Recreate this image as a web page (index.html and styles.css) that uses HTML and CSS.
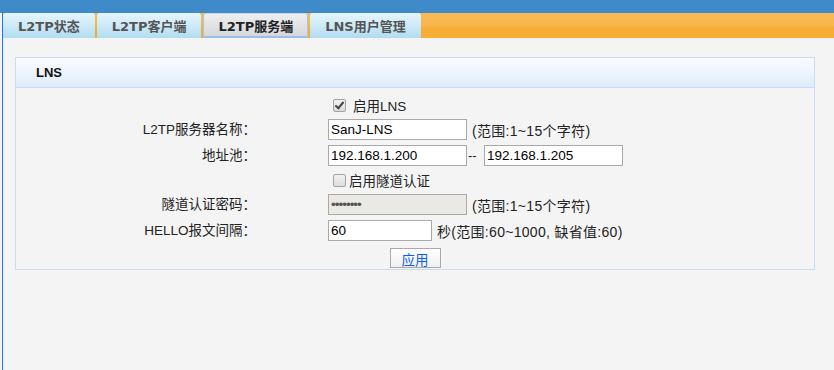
FILE: index.html
```html
<!DOCTYPE html>
<html>
<head>
<meta charset="utf-8">
<link rel="stylesheet" href="styles.css">
</head>
<body>
<div class="topbar"></div>
<div class="frame">
  <div class="tabs">
    <div class="tab">L2TP状态</div>
    <div class="tab">L2TP客户端</div>
    <div class="tab active">L2TP服务端</div>
    <div class="tab">LNS用户管理</div>
  </div>
  <div class="content">
    <div class="panel">
      <div class="panel-head">LNS</div>
      <div class="panel-body">
        <div class="form">
          <div class="cell cbrow"><label class="cb"><input type="checkbox" checked><span class="cbtext wide">启用LNS</span></label></div>

          <div class="label">L2TP服务器名称：</div>
          <div class="cell"><input class="txt" type="text" value="SanJ-LNS"><span class="hint">(范围:1~15个字符)</span></div>

          <div class="label">地址池：</div>
          <div class="cell"><input class="txt" type="text" value="192.168.1.200"><span class="dash">--</span><input class="txt" type="text" value="192.168.1.205"></div>

          <div class="cell cbrow"><label class="cb"><input type="checkbox"><span class="cbtext">启用隧道认证</span></label></div>

          <div class="label">隧道认证密码：</div>
          <div class="cell"><input class="txt pw" type="password" value="12345678" disabled><span class="hint">(范围:1~15个字符)</span></div>

          <div class="label">HELLO报文间隔：</div>
          <div class="cell"><input class="txt short" type="text" value="60"><span class="hint">秒(范围:60~1000, 缺省值:60)</span></div>

          <div class="btnrow"><button class="btn" type="button">应用</button></div>
        </div>
      </div>
    </div>
  </div>
</div>
</body>
</html>
```
FILE: styles.css
```css
html, body {
  margin: 0;
  padding: 0;
  background: #f4f4f4;
  height: 100%;
}
body {
  font-family: "Liberation Sans", Arial, "Noto Sans CJK SC", sans-serif;
  font-size: 13px;
  color: #222;
}
.topbar {
  height: 13px;
  background: #3f8bca;
}
.frame {
  margin-left: 2px;
  border-left: 1px solid #1a78ff;
  min-height: calc(100% - 13px);
  box-sizing: border-box;
}
.tabs {
  display: flex;
  height: 25px;
  background: linear-gradient(to bottom, #f8ba52 0%, #f8b850 45%, #f6ae37 60%, #f6ad36 100%);
}
.tab {
  height: 25px;
  box-sizing: border-box;
  padding: 0 15px;
  margin-right: 2px;
  display: flex;
  align-items: center;
  font-family: "DejaVu Sans", Verdana, "Noto Sans CJK SC", sans-serif;
  font-weight: bold;
  font-size: 13px;
  color: #555;
  background: linear-gradient(to bottom, #e6f5fc 0%, #cdeaf7 50%, #b1dcf0 100%);
  border-radius: 3px 3px 0 0;
}
.tab.active {
  color: #222;
  padding: 0 14px;
  background: linear-gradient(to bottom, #eceeef 0%, #dfe1e3 60%, #d5d8db 100%);
  border: 1px solid #a9c4ea;
  border-bottom: 2px solid #9dbdea;
  border-top-color: #c9d6e6;
  margin-left: 0;
}
.content {
  padding: 19px 0 0 12px;
}
.panel {
  width: 800px;
  box-sizing: border-box;
  border: 1px solid #c6ddf5;
}
.panel-head {
  height: 29px;
  line-height: 29px;
  padding-left: 20px;
  font-weight: bold;
  font-size: 13px;
  color: #111;
  border-bottom: 1px solid #c6ddf5;
  background: linear-gradient(to bottom, #f8fbff 0%, #eef5fd 50%, #deebf9 100%);
}
.panel-body {
  padding: 8px 0 1px 0;
}
.form {
  display: grid;
  grid-template-columns: 240px 1fr;
  column-gap: 72px;
  row-gap: 5px;
  align-items: center;
}
.label {
  text-align: right;
  grid-column: 1;
  height: 21px;
  line-height: 21px;
  font-size: 13.5px;
}
.cell {
  grid-column: 2;
  display: flex;
  align-items: center;
  height: 21px;
}
.cell.cbrow {
  height: 18px;
}
.cb {
  display: flex;
  align-items: center;
  font-size: 13.5px;
}
.cb input {
  appearance: none;
  -webkit-appearance: none;
  width: 13px;
  height: 13px;
  margin: 0 0 0 5px;
  box-sizing: border-box;
  border: 1px solid #a3a3a3;
  border-radius: 2px;
  background: linear-gradient(to bottom, #f2f2f2, #dcdcdc);
  position: relative;
}
.cb input:checked::after {
  content: "";
  position: absolute;
  left: 3px;
  top: 0px;
  width: 3px;
  height: 7px;
  border: solid #444;
  border-width: 0 2px 2px 0;
  transform: rotate(40deg);
}
.cbtext {
  margin-left: 3px;
}
.cbtext.wide {
  margin-left: 7px;
}
.txt {
  width: 139px;
  height: 21px;
  box-sizing: border-box;
  border: 1px solid #a9a9a9;
  padding: 0 2px;
  margin: 0;
  font-family: "Liberation Sans", Arial, sans-serif;
  font-size: 13.5px;
  color: #000;
  background: #fff;
  outline: none;
}
.txt.short {
  width: 104px;
}
.txt.pw {
  background: #ebe9e3;
  color: #555;
  letter-spacing: -1px;
}
.dash {
  width: 17px;
  padding-left: 1px;
  box-sizing: border-box;
}
.hint {
  margin-left: 5px;
  font-size: 14px;
  letter-spacing: 0.3px;
}
.btnrow {
  grid-column: 1 / span 2;
  display: flex;
  justify-content: center;
  margin-top: 2px;
}
.btn {
  width: 51px;
  height: 20px;
  box-sizing: border-box;
  border: 1px solid #a9a9a9;
  background: linear-gradient(to bottom, #ffffff, #f0f0f0);
  color: #0a5cff;
  font-family: "Liberation Sans", Arial, "Noto Sans CJK SC", sans-serif;
  font-size: 13.5px;
  padding: 0;
  border-radius: 0;
}
```
